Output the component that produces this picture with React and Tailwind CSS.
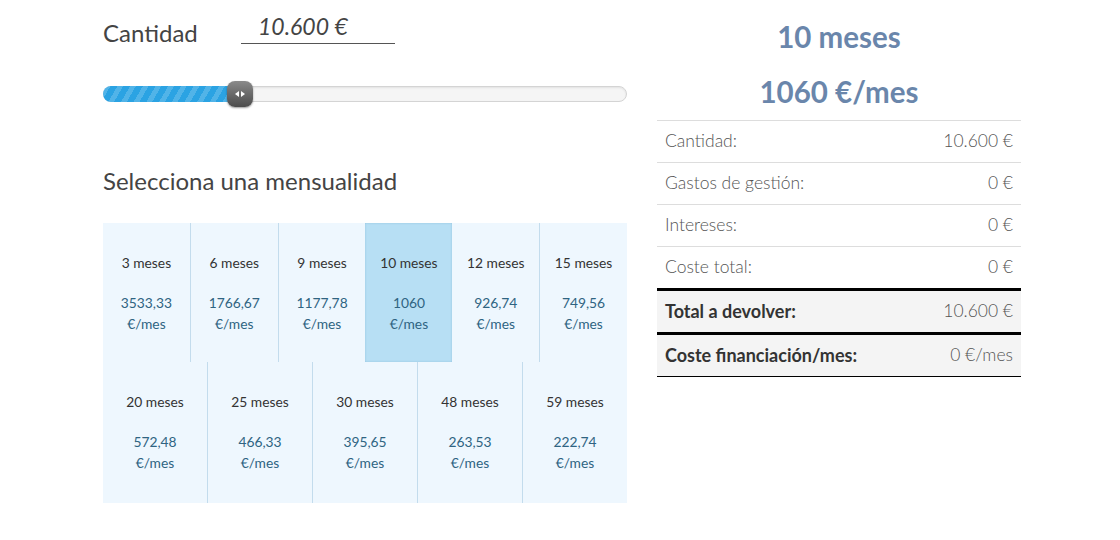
import React from 'react';

const row1 = [
  ['3 meses', '3533,33'],
  ['6 meses', '1766,67'],
  ['9 meses', '1177,78'],
  ['10 meses', '1060'],
  ['12 meses', '926,74'],
  ['15 meses', '749,56'],
];

const row2 = [
  ['20 meses', '572,48'],
  ['25 meses', '466,33'],
  ['30 meses', '395,65'],
  ['48 meses', '263,53'],
  ['59 meses', '222,74'],
];

function Cell({ label, value, selected, last }) {
  return (
    <div
      className={`flex-1 flex flex-col items-center pt-[32px] text-[13.8px] ${
        selected ? 'bg-[#b7dff4] shadow-[inset_0_0_2px_rgba(100,160,200,0.5)]' : ''
      } ${last || selected ? '' : 'border-r border-[#c3dced]'}`}
    >
      <div className="text-[#333] leading-[16px]">{label}</div>
      <div className="mt-[21px] text-[#2f6482] leading-[21px] text-center">
        {value}
        <br />
        €/mes
      </div>
    </div>
  );
}

function SummaryRow({ label, value, strong }) {
  return (
    <div
      className={`flex justify-between items-center px-[8px] ${
        strong ? 'bg-[#f4f4f4] h-[41px]' : 'h-[42px] border-b border-[#ddd]'
      }`}
    >
      <span className={strong ? 'font-bold text-[#333] text-[18px]' : 'font-light text-[#555] text-[17.5px]'}>
        {label}
      </span>
      <span className="font-light text-[#555] text-[17.5px]">{value}</span>
    </div>
  );
}

export default function App() {
  return (
    <div
      className="w-[1120px] h-[540px] bg-white flex gap-[30px] pl-[103px]"
      style={{ fontFamily: 'Lato, "Open Sans", sans-serif' }}
    >
      <div className="w-[524px] flex flex-col">
        <div className="flex items-end h-[44px]">
          <span className="text-[24px] text-[#444] leading-[24px] mb-[-1px] w-[138px]">Cantidad</span>
          <div className="w-[154px] border-b border-[#555] h-[44px] flex items-center pl-[17px]">
            <span className="italic text-[23px] text-[#444] mt-[10px]">10.600 €</span>
          </div>
        </div>

        <div className="relative mt-[42px] h-[16px] rounded-full bg-[#f5f5f5] border border-[#d4d4d4] shadow-[inset_0_1px_2px_rgba(0,0,0,0.08)]">
          <div
            className="absolute left-[-1px] top-[-1px] bottom-[-1px] w-[138px] rounded-l-full bg-[#2ba3e3]"
            style={{
              backgroundImage:
                'repeating-linear-gradient(-60deg, rgba(255,255,255,0.18) 0 5px, transparent 5px 11px)',
            }}
          />
          <div className="absolute left-[123px] top-[-6px] w-[26px] h-[26px] rounded-[8px] bg-gradient-to-b from-[#8a8a8a] to-[#4c4c4c] shadow-[0_1px_2px_rgba(0,0,0,0.4)] flex items-center justify-center gap-[2px]">
            <svg width="4" height="6" viewBox="0 0 4 6"><path d="M4 0 L0 3 L4 6Z" fill="#fff" /></svg>
            <svg width="4" height="6" viewBox="0 0 4 6"><path d="M0 0 L4 3 L0 6Z" fill="#fff" /></svg>
          </div>
        </div>

        <div className="mt-[65px] text-[24px] text-[#444] leading-[28px]">Selecciona una mensualidad</div>

        <div className="mt-[28px] bg-[#eef7fe]">
          <div className="flex h-[139px]">
            {row1.map(([l, v], i) => (
              <Cell
                key={l}
                label={l}
                value={v}
                selected={i === 3}
                last={i === row1.length - 1 || i === 2}
              />
            ))}
          </div>
          <div className="flex h-[141px]">
            {row2.map(([l, v], i) => (
              <Cell key={l} label={l} value={v} last={i === row2.length - 1} />
            ))}
          </div>
        </div>
      </div>

      <div className="w-[364px] flex flex-col">
        <div className="text-center font-bold text-[29.5px] text-[#6a86ab] leading-[34px] mt-[20px]">10 meses</div>
        <div className="text-center font-bold text-[29.5px] text-[#6a86ab] leading-[34px] mt-[21px]">1060 €/mes</div>
        <div className="mt-[11px] border-t border-[#ddd]">
          <SummaryRow label="Cantidad:" value="10.600 €" />
          <SummaryRow label="Gastos de gestión:" value="0 €" />
          <SummaryRow label="Intereses:" value="0 €" />
          <div className="flex justify-between items-center px-[8px] h-[41px]">
            <span className="font-light text-[#555] text-[17.5px]">Coste total:</span>
            <span className="font-light text-[#555] text-[17.5px]">0 €</span>
          </div>
          <div className="border-t-[3px] border-black" />
          <SummaryRow label="Total a devolver:" value="10.600 €" strong />
          <div className="border-t-[3px] border-black" />
          <SummaryRow label="Coste financiación/mes:" value="0 €/mes" strong />
          <div className="border-t border-black" />
        </div>
      </div>
    </div>
  );
}
